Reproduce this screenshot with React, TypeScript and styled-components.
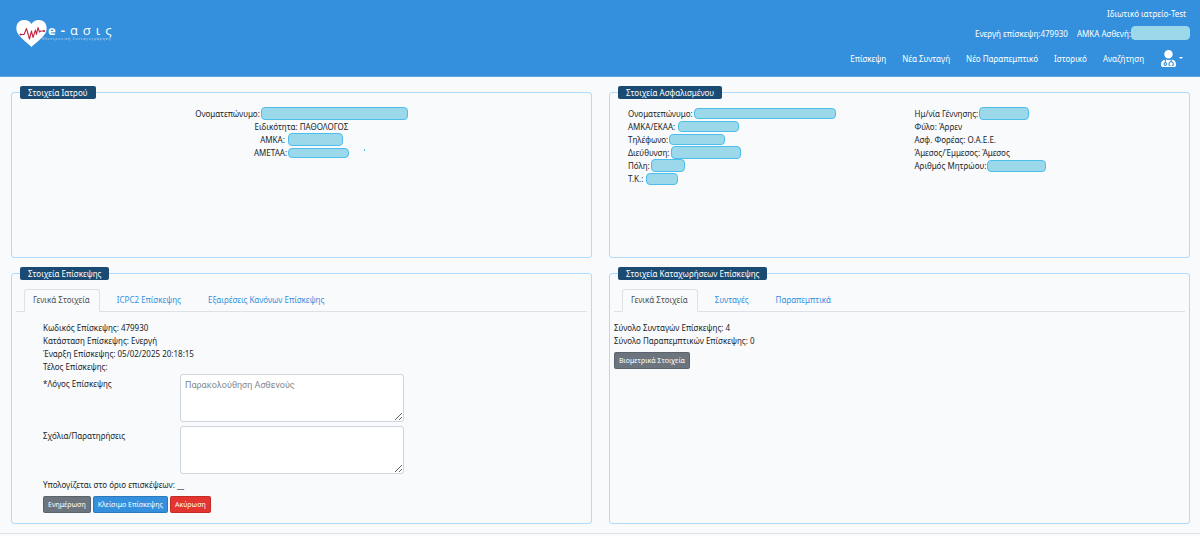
import React from "react";
import styled, { createGlobalStyle } from "styled-components";
import { FaUserMd } from "react-icons/fa";

const Global = createGlobalStyle`
  *, *::before, *::after { box-sizing: border-box; }
  body {
    margin: 0;
    background: #f8fafc;
    color: #212529;
    font-family: "Noto Sans", sans-serif;
    font-size: 8px;
    line-height: 13px;
  }
  button, textarea { font-family: inherit; }
`;

const Header = styled.header`
  display: flex;
  justify-content: space-between;
  background: #3490dc;
  border-bottom: 1px solid #5aa5e3;
  color: #fff;
  height: 77px;
  padding: 0 10px 0 16px;
`;

const Brand = styled.a`
  display: flex;
  align-items: flex-start;
  padding-top: 20px;
  color: #fff;
  text-decoration: none;
`;

const BrandText = styled.span`
  display: flex;
  flex-direction: column;
  padding-top: 3px;
`;

const BrandName = styled.span`
  font-family: "Open Sans", sans-serif;
  font-size: 13px;
  line-height: 14px;
  letter-spacing: 5px;
  padding-left: 1px;
`;

const BrandSub = styled.span`
  font-family: "Open Sans", sans-serif;
  font-size: 3px;
  line-height: 5px;
  letter-spacing: 1px;
  margin-left: -5px;
  opacity: 0.75;
`;

const HeaderSide = styled.div`
  display: flex;
  flex-direction: column;
  align-items: flex-end;
  padding-top: 7px;
`;

const Clinic = styled.div`
  padding-right: 4px;
`;

const Status = styled.div`
  display: flex;
  align-items: center;
  gap: 9px;
  height: 14px;
  margin-top: 6px;
`;

const Patient = styled.span`
  display: flex;
  align-items: center;
`;

const Nav = styled.nav`
  display: flex;
  align-items: center;
  gap: 16px;
  height: 20px;
  margin-top: 8px;
  padding-right: 7px;
`;

const NavLink = styled.a`
  color: #fff;
  text-decoration: none;
`;

const UserButton = styled.button`
  display: flex;
  align-items: center;
  gap: 2px;
  border: 0;
  padding: 0;
  background: none;
  color: #fff;
`;

const Caret = styled.span`
  border: 2px solid transparent;
  border-top-color: currentColor;
  border-bottom: 0;
`;

const Redacted = styled.span<{ $w: number; $h?: number; $plain?: boolean }>`
  display: inline-block;
  flex: none;
  width: ${(p) => p.$w}px;
  height: ${(p) => p.$h ?? 11}px;
  border: 1px solid ${(p) => (p.$plain ? "#9bd9ea" : "#4dbdec")};
  border-radius: 4px;
  background: #9bd9ea;
`;

const Main = styled.main`
  display: grid;
  grid-template-columns: 1fr 1fr;
  column-gap: 17px;
  row-gap: 9px;
  padding: 9px 10px 9px 11px;
`;

const Panel = styled.fieldset<{ $min: number }>`
  min-width: 0;
  min-height: ${(p) => p.$min}px;
  margin: 0;
  padding: 0 4px 9px;
  border: 1px solid #b0dbfa;
  border-radius: 3px;
`;

const Legend = styled.legend`
  margin-left: 4px;
  padding: 0 8px;
  border-radius: 2px;
  background: #1b4b72;
  color: #fff;
`;

const Centered = styled.div`
  display: flex;
  flex-direction: column;
  align-items: center;
  padding-top: 8px;
`;

const Columns = styled.div`
  display: grid;
  grid-template-columns: 1fr 1fr;
  column-gap: 2px;
  padding-top: 8px;
`;

const Column = styled.div`
  padding-left: 14px;
`;

const Line = styled.div<{ $gap?: number }>`
  display: flex;
  align-items: center;
  position: relative;
  gap: ${(p) => p.$gap ?? 1}px;
  height: 13px;
  white-space: nowrap;
`;

const Speck = styled.span`
  position: absolute;
  right: -16px;
  top: 3px;
  width: 1px;
  height: 2px;
  background: #4dbdec;
`;

const Tabs = styled.div`
  display: flex;
  margin-top: 9px;
  padding-left: 8px;
  border-bottom: 1px solid #dee2e6;
`;

const Tab = styled.button<{ $active?: boolean }>`
  height: 23px;
  margin: 0 8px -1px 0;
  padding: 0 9px 2px 8px;
  border: 1px solid ${(p) => (p.$active ? "#dee2e6" : "transparent")};
  border-bottom-color: ${(p) => (p.$active ? "#f8fafc" : "transparent")};
  border-radius: 3px 3px 0 0;
  background: ${(p) => (p.$active ? "#f8fafc" : "transparent")};
  color: ${(p) => (p.$active ? "#495057" : "#3490dc")};
  font-size: 8px;
  line-height: 13px;
`;

const VisitBody = styled.div`
  padding: 9px 0 0 27px;
`;

const VisitFacts = styled.div`
  margin-bottom: 1px;
`;

const EntriesBody = styled.div`
  padding-top: 9px;
`;

const Field = styled.div`
  display: grid;
  grid-template-columns: 137px 224px;
  margin-bottom: 4px;
`;

const FieldLabel = styled.label`
  padding-top: 3px;
`;

const Area = styled.textarea`
  display: block;
  width: 100%;
  height: 48px;
  padding: 3px 4px;
  border: 1px solid #ced4da;
  border-radius: 3px;
  background: #fff;
  color: #808890;
  font-family: Roboto, sans-serif;
  font-size: 9px;
  line-height: 14px;
`;

const Buttons = styled.div`
  display: flex;
  gap: 2px;
  margin-top: 5px;
`;

const tones = { gray: "#6c757d", blue: "#3490dc", red: "#e3342f" };

const Button = styled.button<{ $tone: keyof typeof tones }>`
  height: 17px;
  padding: 0 4px 1px;
  border: 1px solid rgba(0, 0, 0, 0.15);
  border-radius: 2px;
  background: ${(p) => tones[p.$tone]};
  color: #fff;
  font-size: 7px;
  line-height: 13px;
`;

const Footer = styled.footer`
  height: 4px;
  border-top: 1px solid #dee2e6;
`;

const Heart = () => (
  <svg width="31" height="27" viewBox="0 0 31 27" aria-hidden="true">
    <path
      d="M15.5 27 C12 23.5 4 18 1.2 12.5 C-1 7.5 1 0 8 0 C11.5 0 14 1.6 15.5 4 C17 1.6 19.5 0 23 0 C30 0 32 7.5 29.8 12.5 C27 18 19 23.5 15.5 27Z"
      fill="#fff"
    />
    <path
      d="M4 14.5 H8 L10.5 8.5 L13.5 19 L15.5 11 L17 17.5 L19.5 10 L20.5 14.5 L22 7.5 L23.5 12 L25 11 H29"
      fill="none"
      stroke="#c0283f"
      strokeWidth="1.1"
      strokeLinejoin="round"
    />
    <circle cx="4.5" cy="14.5" r="1" fill="#c0283f" />
    <circle cx="28" cy="11" r="1" fill="#c0283f" />
  </svg>
);

const navItems = ["Επίσκεψη", "Νέα Συνταγή", "Νέο Παραπεμπτικό", "Ιστορικό", "Αναζήτηση"];

export default function App() {
  return (
    <>
      <Global />
      <Header>
        <Brand href="#">
          <Heart />
          <BrandText>
            <BrandName>
              <b>e-</b>ασις
            </BrandName>
            <BrandSub>Ηλεκτρονική Συνταγογράφηση</BrandSub>
          </BrandText>
        </Brand>
        <HeaderSide>
          <Clinic>Ιδιωτικό ιατρείο-Test</Clinic>
          <Status>
            <span>Ενεργή επίσκεψη:479930</span>
            <Patient>
              ΑΜΚΑ Ασθενή:
              <Redacted $w={59} $h={14} $plain />
            </Patient>
          </Status>
          <Nav>
            {navItems.map((item) => (
              <NavLink href="#" key={item}>
                {item}
              </NavLink>
            ))}
            <UserButton aria-label="Λογαριασμός">
              <FaUserMd size={17} />
              <Caret />
            </UserButton>
          </Nav>
        </HeaderSide>
      </Header>
      <Main>
        <Panel $min={172}>
          <Legend>Στοιχεία Ιατρού</Legend>
          <Centered>
            <Line>Ονοματεπώνυμο:<Redacted $w={147} $h={13} /></Line>
            <Line>Ειδικότητα: ΠΑΘΟΛΟΓΟΣ</Line>
            <Line $gap={3}>ΑΜΚΑ:<Redacted $w={55} $h={13} /></Line>
            <Line>
              ΑΜΕΤΑΑ:
              <Redacted $w={61} $h={10} />
              <Speck />
            </Line>
          </Centered>
        </Panel>
        <Panel $min={172}>
          <Legend>Στοιχεία Ασφαλισμένου</Legend>
          <Columns>
            <Column>
              <Line>Ονοματεπώνυμο:<Redacted $w={142} /></Line>
              <Line $gap={3}>ΑΜΚΑ/ΕΚΑΑ:<Redacted $w={61} /></Line>
              <Line>Τηλέφωνο:<Redacted $w={56} /></Line>
              <Line>Διεύθυνση:<Redacted $w={70} $h={13} /></Line>
              <Line>Πόλη:<Redacted $w={34} $h={13} /></Line>
              <Line $gap={3}>Τ.Κ.:<Redacted $w={32} $h={12} /></Line>
            </Column>
            <Column>
              <Line>Ημ/νία Γέννησης:<Redacted $w={50} $h={13} /></Line>
              <Line>Φύλο: Άρρεν</Line>
              <Line>Ασφ. Φορέας: Ο.Α.Ε.Ε.</Line>
              <Line>Άμεσος/Έμμεσος: Άμεσος</Line>
              <Line>Αριθμός Μητρώου:<Redacted $w={59} $h={12} /></Line>
            </Column>
          </Columns>
        </Panel>
        <Panel $min={257}>
          <Legend>Στοιχεία Επίσκεψης</Legend>
          <Tabs role="tablist">
            <Tab role="tab" aria-selected $active>Γενικά Στοιχεία</Tab>
            <Tab role="tab">ICPC2 Επίσκεψης</Tab>
            <Tab role="tab">Εξαιρέσεις Κανόνων Επίσκεψης</Tab>
          </Tabs>
          <VisitBody>
            <VisitFacts>
              <Line>Κωδικός Επίσκεψης: 479930</Line>
              <Line>Κατάσταση Επίσκεψης: Ενεργή</Line>
              <Line>Έναρξη Επίσκεψης: 05/02/2025 20:18:15</Line>
              <Line>Τέλος Επίσκεψης:</Line>
            </VisitFacts>
            <Field>
              <FieldLabel htmlFor="reason">*Λόγος Επίσκεψης</FieldLabel>
              <Area id="reason" defaultValue="Παρακολούθηση Ασθενούς" />
            </Field>
            <Field>
              <FieldLabel htmlFor="notes">Σχόλια/Παρατηρήσεις</FieldLabel>
              <Area id="notes" />
            </Field>
            <Line>Υπολογίζεται στο όριο επισκέψεων: __</Line>
            <Buttons>
              <Button $tone="gray">Ενημέρωση</Button>
              <Button $tone="blue">Κλείσιμο Επίσκεψης</Button>
              <Button $tone="red">Ακύρωση</Button>
            </Buttons>
          </VisitBody>
        </Panel>
        <Panel $min={257}>
          <Legend>Στοιχεία Καταχωρήσεων Επίσκεψης</Legend>
          <Tabs role="tablist">
            <Tab role="tab" aria-selected $active>Γενικά Στοιχεία</Tab>
            <Tab role="tab">Συνταγές</Tab>
            <Tab role="tab">Παραπεμπτικά</Tab>
          </Tabs>
          <EntriesBody>
            <Line>Σύνολο Συνταγών Επίσκεψης: 4</Line>
            <Line>Σύνολο Παραπεμπτικών Επίσκεψης: 0</Line>
            <Buttons>
              <Button $tone="gray">Βιομετρικά Στοιχεία</Button>
            </Buttons>
          </EntriesBody>
        </Panel>
      </Main>
      <Footer />
    </>
  );
}
